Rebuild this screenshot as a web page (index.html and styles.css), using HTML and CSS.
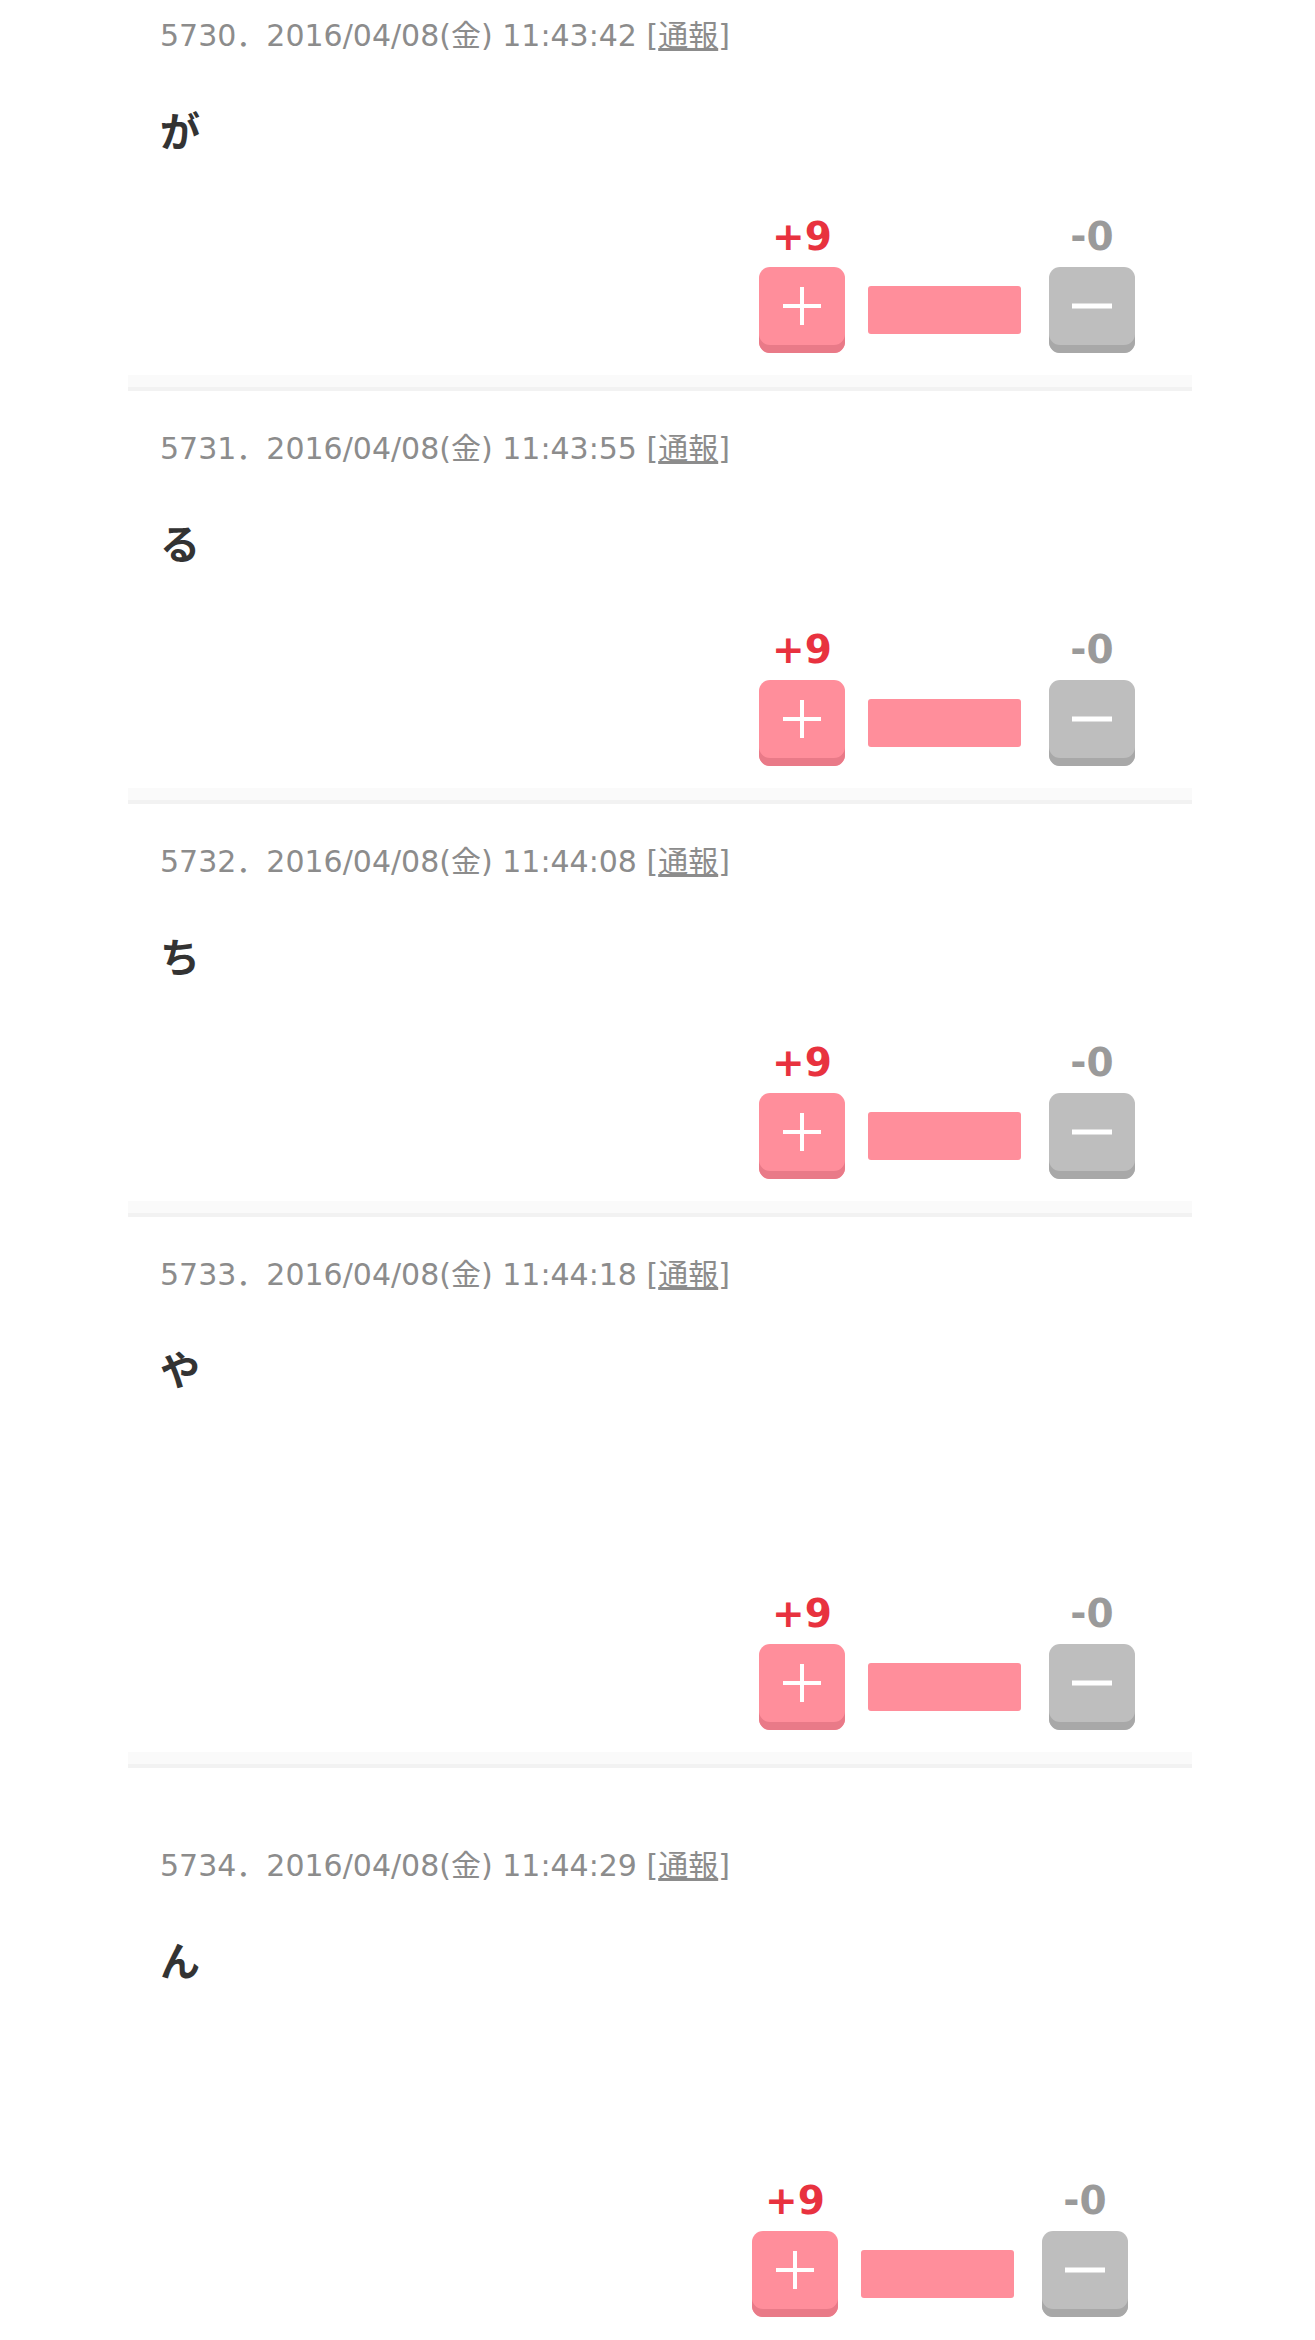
FILE: index.html
```html
<!DOCTYPE html>
<html lang="ja">
<head>
    <meta charset="UTF-8">
    <title>コメント</title>
    <link rel="stylesheet" href="styles.css">
</head>
<body>
    <div class="thread">
        <div class="res">
            <div class="res-head">5730．2016/04/08(金) 11:43:42 [<a href="#">通報</a>]</div>
            <div class="res-body">が</div>
            <div class="vote">
                <div class="vote-col">
                    <span class="count plus">+9</span>
                    <span class="btn btn-plus"><svg width="42" height="42" viewBox="0 0 42 42"><path d="M21 2v38M2 21h38" stroke="#fff" stroke-width="4"/></svg></span>
                </div>
                <div class="bar"></div>
                <div class="vote-col">
                    <span class="count minus">-0</span>
                    <span class="btn btn-minus"><svg width="42" height="42" viewBox="0 0 42 42"><path d="M1 21h40" stroke="#fff" stroke-width="5"/></svg></span>
                </div>
            </div>
        </div>
        <div class="res">
            <div class="res-head">5731．2016/04/08(金) 11:43:55 [<a href="#">通報</a>]</div>
            <div class="res-body">る</div>
            <div class="vote">
                <div class="vote-col">
                    <span class="count plus">+9</span>
                    <span class="btn btn-plus"><svg width="42" height="42" viewBox="0 0 42 42"><path d="M21 2v38M2 21h38" stroke="#fff" stroke-width="4"/></svg></span>
                </div>
                <div class="bar"></div>
                <div class="vote-col">
                    <span class="count minus">-0</span>
                    <span class="btn btn-minus"><svg width="42" height="42" viewBox="0 0 42 42"><path d="M1 21h40" stroke="#fff" stroke-width="5"/></svg></span>
                </div>
            </div>
        </div>
        <div class="res">
            <div class="res-head">5732．2016/04/08(金) 11:44:08 [<a href="#">通報</a>]</div>
            <div class="res-body">ち</div>
            <div class="vote">
                <div class="vote-col">
                    <span class="count plus">+9</span>
                    <span class="btn btn-plus"><svg width="42" height="42" viewBox="0 0 42 42"><path d="M21 2v38M2 21h38" stroke="#fff" stroke-width="4"/></svg></span>
                </div>
                <div class="bar"></div>
                <div class="vote-col">
                    <span class="count minus">-0</span>
                    <span class="btn btn-minus"><svg width="42" height="42" viewBox="0 0 42 42"><path d="M1 21h40" stroke="#fff" stroke-width="5"/></svg></span>
                </div>
            </div>
        </div>
        <div class="res">
            <div class="res-head">5733．2016/04/08(金) 11:44:18 [<a href="#">通報</a>]</div>
            <div class="res-body">や<br><br><br><br></div>
            <div class="vote">
                <div class="vote-col">
                    <span class="count plus">+9</span>
                    <span class="btn btn-plus"><svg width="42" height="42" viewBox="0 0 42 42"><path d="M21 2v38M2 21h38" stroke="#fff" stroke-width="4"/></svg></span>
                </div>
                <div class="bar"></div>
                <div class="vote-col">
                    <span class="count minus">-0</span>
                    <span class="btn btn-minus"><svg width="42" height="42" viewBox="0 0 42 42"><path d="M1 21h40" stroke="#fff" stroke-width="5"/></svg></span>
                </div>
            </div>
        </div>
        <div class="ad"></div>
        <div class="res res-last">
            <div class="res-head">5734．2016/04/08(金) 11:44:29 [<a href="#">通報</a>]</div>
            <div class="res-body">ん<br><br><br><br></div>
            <div class="vote">
                <div class="vote-col">
                    <span class="count plus">+9</span>
                    <span class="btn btn-plus"><svg width="42" height="42" viewBox="0 0 42 42"><path d="M21 2v38M2 21h38" stroke="#fff" stroke-width="4"/></svg></span>
                </div>
                <div class="bar"></div>
                <div class="vote-col">
                    <span class="count minus">-0</span>
                    <span class="btn btn-minus"><svg width="42" height="42" viewBox="0 0 42 42"><path d="M1 21h40" stroke="#fff" stroke-width="5"/></svg></span>
                </div>
            </div>
        </div>
    </div>
</body>
</html>
```

FILE: styles.css
```css
* {
    padding: 0;
    margin: 0;
    box-sizing: border-box;
}
body {
    background-color: #fff;
    font-family: "DejaVu Sans", "Noto Sans CJK JP", sans-serif;
}
.thread {
    width: 1064px;
    margin-left: 128px;
}
.res {
    padding: 38px 0 0 32px;
}
.res:first-child {
    padding-top: 16px;
}
.res::after {
    content: "";
    display: block;
    height: 12px;
    margin: 22px 0 0 -32px;
    background-color: #fafafa;
    border-bottom: 4px solid #f2f2f2;
}
.res:last-child::after {
    display: none;
}
.res-head {
    height: 40px;
    overflow: hidden;
    font-size: 30px;
    line-height: 40px;
    color: #8c8c8c;
    white-space: nowrap;
}
.res-head a {
    color: #8c8c8c;
}
.res-body {
    margin-top: 50px;
    font-family: "Noto Sans CJK JP", sans-serif;
    font-size: 40px;
    font-weight: bold;
    line-height: 46px;
    color: #333;
}
.vote {
    display: flex;
    justify-content: flex-end;
    align-items: flex-end;
    margin-top: 67px;
    padding-right: 57px;
}
.res-last .vote {
    margin-top: 63px;
    padding-right: 64px;
}
.vote-col {
    display: flex;
    flex-direction: column;
    align-items: center;
    width: 86px;
}
.count {
    height: 36px;
    font-size: 39px;
    font-weight: bold;
    line-height: 36px;
    margin-bottom: 12px;
}
.count.plus {
    color: #e8323f;
}
.count.minus {
    color: #9a9a9a;
}
.btn {
    display: flex;
    align-items: center;
    justify-content: center;
    width: 86px;
    height: 86px;
    padding-bottom: 8px;
    border-radius: 11px;
}
.btn-plus {
    background-color: #ff8e9b;
    box-shadow: inset 0 -8px 0 #e97a88;
}
.btn-minus {
    background-color: #bebebe;
    box-shadow: inset 0 -8px 0 #a8a8a8;
}
.bar {
    width: 153px;
    height: 48px;
    margin: 0 28px 19px 23px;
    border-radius: 3px;
    background-color: #ff8e9b;
}
.ad {
    height: 40px;
}
```
